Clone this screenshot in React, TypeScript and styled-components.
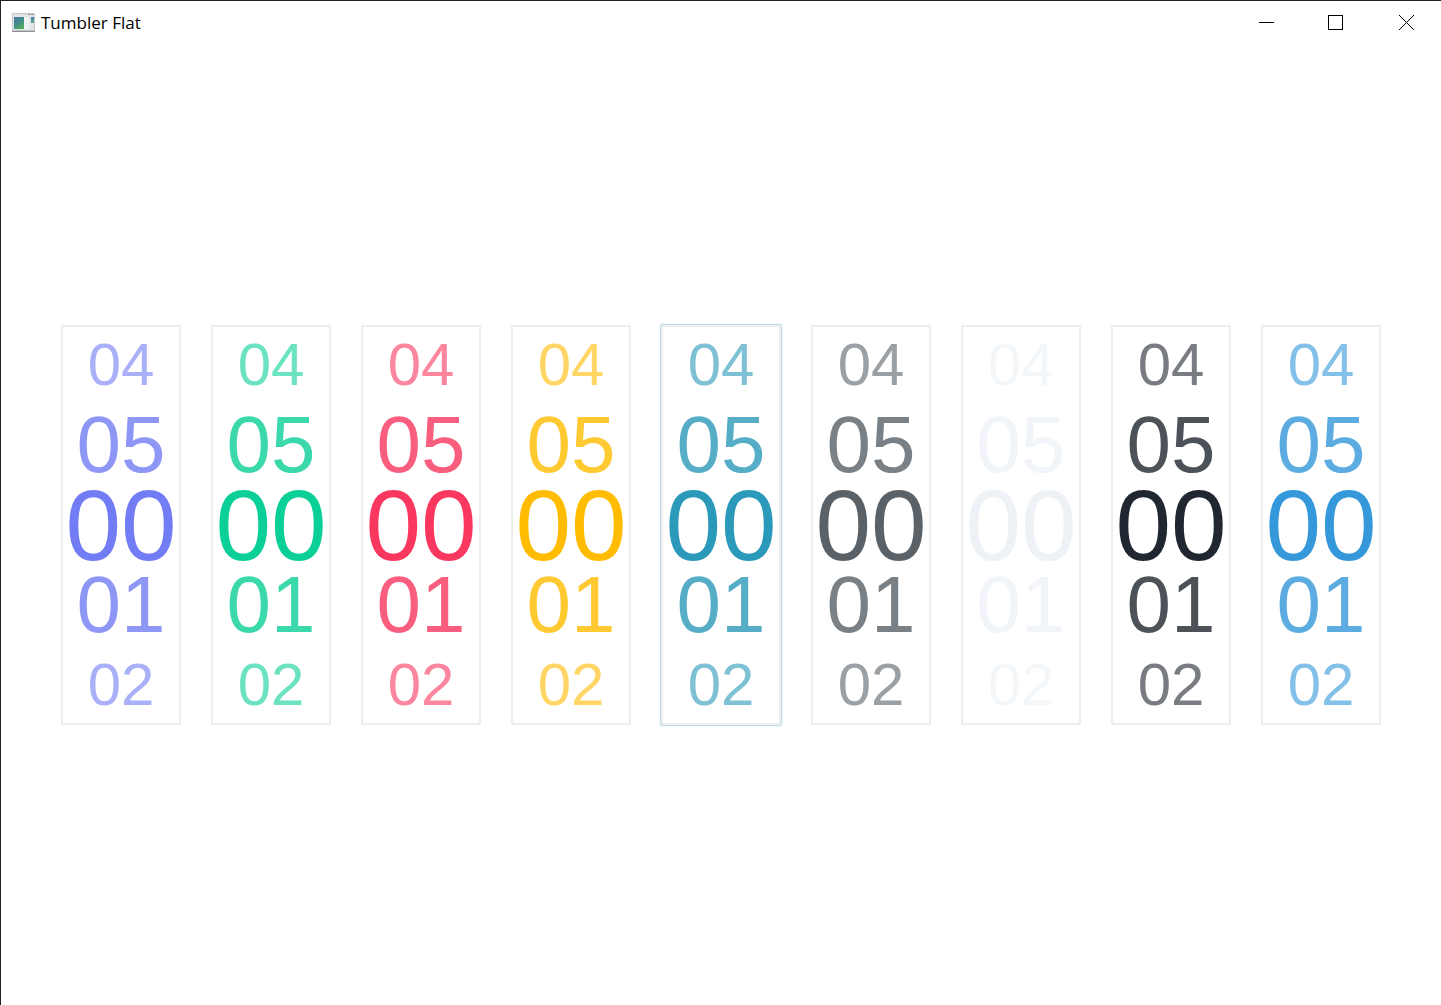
import React, { useState } from "react";
import styled, { createGlobalStyle } from "styled-components";

const GlobalStyle = createGlobalStyle`
  *, *::before, *::after { box-sizing: border-box; }
  body { margin: 0; background: #ffffff; }
`;

const Window = styled.div`
  display: flex;
  flex-direction: column;
  min-height: 100vh;
  border-top: 1px solid #231f24;
  border-left: 1px solid #231f24;
  background: #ffffff;
`;

const TitleBar = styled.header`
  display: flex;
  align-items: center;
  justify-content: space-between;
  height: 44px;
  padding-left: 10px;
`;

const Caption = styled.div`
  display: flex;
  align-items: center;
  gap: 6px;
`;

const Title = styled.h1`
  margin: 0;
  font: 400 17px/24px "Open Sans", "Noto Sans", sans-serif;
  color: #000000;
`;

const WindowControls = styled.div`
  display: flex;
  height: 100%;
`;

const ControlButton = styled.button`
  display: flex;
  align-items: center;
  justify-content: center;
  width: 70px;
  padding: 0;
  border: 0;
  background: transparent;
  color: #000000;
`;

const Main = styled.main`
  display: flex;
  flex: 1;
  flex-wrap: wrap;
  align-items: center;
  align-content: center;
  justify-content: center;
  gap: 30px;
`;

const TumblerFrame = styled.ul<{ $color: string; $active: boolean }>`
  display: flex;
  flex-direction: column;
  justify-content: center;
  width: 120px;
  height: 400px;
  margin: 0;
  padding: 0;
  list-style: none;
  outline: none;
  color: ${(p) => p.$color};
  border: 2px solid #ededed;
  border-radius: ${(p) => (p.$active ? 1 : 0)}px;
  box-shadow: ${(p) => (p.$active ? "0 0 0 1px #bcdde7, 0 0 2px 1px #cfe7ee" : "none")};
`;

const SIZES = [100, 80, 60];
const OPACITIES = [1, 0.8, 0.6];

const Digit = styled.li<{ $distance: number }>`
  flex: none;
  height: 80px;
  text-align: center;
  white-space: nowrap;
  font-family: "Liberation Sans", Arial, sans-serif;
  font-size: ${(p) => SIZES[p.$distance]}px;
  line-height: 80px;
  opacity: ${(p) => OPACITIES[p.$distance]};
`;

const AppIcon = () => (
  <svg width="24" height="20" viewBox="0 0 24 20" aria-hidden="true">
    <defs>
      <linearGradient id="pane" x1="0" y1="0" x2="0.6" y2="1">
        <stop offset="0" stopColor="#4a78ab" />
        <stop offset="0.6" stopColor="#438f8a" />
        <stop offset="1" stopColor="#4fae5c" />
      </linearGradient>
      <linearGradient id="strip" x1="0" y1="0" x2="0" y2="1">
        <stop offset="0" stopColor="#4a78b4" />
        <stop offset="1" stopColor="#5fae86" />
      </linearGradient>
    </defs>
    <rect x="1" y="0" width="23" height="19" fill="#c3c8ca" />
    <rect x="2" y="1" width="21" height="16" fill="#e2e5e6" />
    <rect x="3" y="4" width="10" height="12" fill="url(#pane)" />
    <rect x="13" y="4" width="5" height="12" fill="#f0f1f2" />
    <rect x="20" y="4" width="3" height="6" fill="url(#strip)" />
    <path d="M17 1.500H19M20 1.500H22" stroke="#8d9296" />
    <path d="M1 18.500H24" stroke="#8d9194" />
  </svg>
);

const MinimizeIcon = () => (
  <svg width="16" height="16" viewBox="0 0 16 16" aria-hidden="true">
    <path d="M1 7.500H16" stroke="currentColor" shapeRendering="crispEdges" />
  </svg>
);

const MaximizeIcon = () => (
  <svg width="16" height="16" viewBox="0 0 16 16" aria-hidden="true">
    <path d="M0.500 0.500H14.500V14.500H0.500Z" fill="none" stroke="currentColor" shapeRendering="crispEdges" />
  </svg>
);

const CloseIcon = () => (
  <svg width="16" height="16" viewBox="0 0 16 16" aria-hidden="true">
    <path d="M1 0L16 15M16 0L1 15" stroke="currentColor" />
  </svg>
);

const TUMBLERS = [
  { name: "Primary", color: "#727cf5" },
  { name: "Success", color: "#0acf97" },
  { name: "Danger", color: "#fa375f" },
  { name: "Warning", color: "#ffbc00" },
  { name: "Info", color: "#2b99b9" },
  { name: "Secondary", color: "#5a6268" },
  { name: "Light", color: "#eef2f7" },
  { name: "Dark", color: "#212730" },
  { name: "Link", color: "#3498db" },
];

const COUNT = 6;
const OFFSETS = [-2, -1, 0, 1, 2];

type TumblerProps = { name: string; color: string; active: boolean; onActivate: () => void };

function Tumbler({ name, color, active, onActivate }: TumblerProps) {
  const [value, setValue] = useState(0);
  const turn = (step: number) => setValue((v) => (v + step + COUNT) % COUNT);

  return (
    <TumblerFrame
      role="listbox"
      aria-label={name}
      tabIndex={0}
      $color={color}
      $active={active}
      onFocus={onActivate}
      onWheel={(e) => turn(e.deltaY > 0 ? 1 : -1)}
      onKeyDown={(e) => {
        if (e.key === "ArrowDown") turn(1);
        if (e.key === "ArrowUp") turn(-1);
      }}
    >
      {OFFSETS.map((offset) => (
        <Digit
          key={offset}
          role="option"
          aria-selected={offset === 0}
          $distance={Math.abs(offset)}
          onClick={() => turn(offset)}
        >
          {String((value + offset + COUNT) % COUNT).padStart(2, "0")}
        </Digit>
      ))}
    </TumblerFrame>
  );
}

export default function App() {
  const [activeName, setActiveName] = useState("Info");

  return (
    <>
      <GlobalStyle />
      <Window>
        <TitleBar>
          <Caption>
            <AppIcon />
            <Title>Tumbler Flat</Title>
          </Caption>
          <WindowControls>
            <ControlButton type="button" aria-label="Minimize"><MinimizeIcon /></ControlButton>
            <ControlButton type="button" aria-label="Maximize"><MaximizeIcon /></ControlButton>
            <ControlButton type="button" aria-label="Close"><CloseIcon /></ControlButton>
          </WindowControls>
        </TitleBar>
        <Main>
          {TUMBLERS.map((t) => (
            <Tumbler
              key={t.name}
              name={t.name}
              color={t.color}
              active={t.name === activeName}
              onActivate={() => setActiveName(t.name)}
            />
          ))}
        </Main>
      </Window>
    </>
  );
}
